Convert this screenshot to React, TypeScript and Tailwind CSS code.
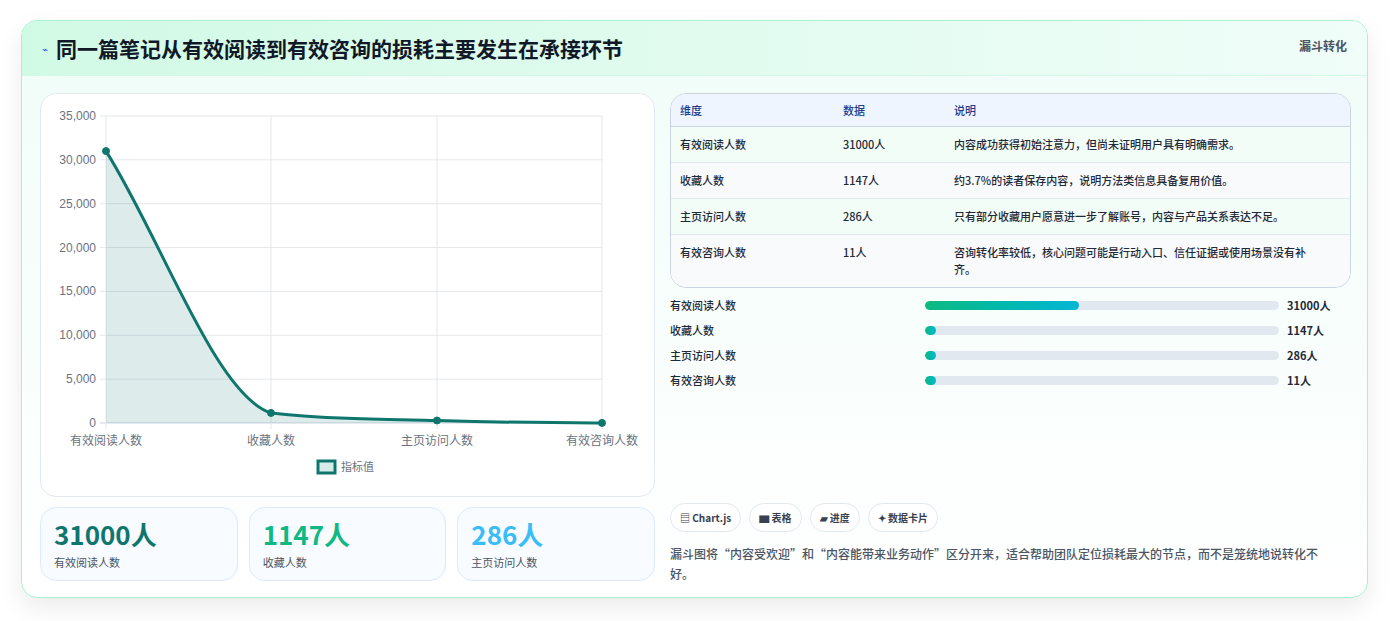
const ff = { fontFamily: '"Noto Sans CJK SC", "Noto Sans", sans-serif' };

const rows = [
  ['有效阅读人数', '31000人', '内容成功获得初始注意力，但尚未证明用户具有明确需求。'],
  ['收藏人数', '1147人', '约3.7%的读者保存内容，说明方法类信息具备复用价值。'],
  ['主页访问人数', '286人', '只有部分收藏用户愿意进一步了解账号，内容与产品关系表达不足。'],
  ['有效咨询人数', '11人', '咨询转化率较低，核心问题可能是行动入口、信任证据或使用场景没有补齐。'],
];
const bars = [
  ['有效阅读人数', 31000, '31000人'],
  ['收藏人数', 1147, '1147人'],
  ['主页访问人数', 286, '286人'],
  ['有效咨询人数', 11, '11人'],
] as const;

function Chart() {
  const ox = 40, oy = 93;
  const X = [105, 270, 436, 601].map((v) => v - ox);
  const yv = (v: number) => 422 - oy - (v / 35000) * 307;
  const vals = [31000, 1147, 286, 11];
  const line = `M${X[0]},${yv(31000)} C${160 - ox},${237 - oy} ${215 - ox},${395 - oy} ${X[1]},${yv(1147)} C${325 - ox},${418 - oy} ${380 - ox},${418.5 - oy} ${X[2]},${yv(286)} C${491 - ox},${421 - oy} ${546 - ox},${422 - oy} ${X[3]},${yv(11)}`;
  const ticks = [0, 5000, 10000, 15000, 20000, 25000, 30000, 35000];
  const labels = ['有效阅读人数', '收藏人数', '主页访问人数', '有效咨询人数'];
  return (
    <svg width="613" height="401" className="block" style={ff}>
      {ticks.map((t) => (
        <g key={t}>
          <line x1={X[0] - 6} x2={X[3]} y1={yv(t)} y2={yv(t)} stroke={t === 0 ? '#cbd5e1' : '#e5e7eb'} />
          <text x={55} y={yv(t) + 4} textAnchor="end" fontSize="12" fill="#6b7280" fontFamily="Liberation Sans, sans-serif">
            {t.toLocaleString('en-US')}
          </text>
        </g>
      ))}
      {X.map((x) => (
        <line key={x} x1={x} x2={x} y1={yv(35000)} y2={yv(0) + 6} stroke="#e5e7eb" />
      ))}
      <path d={`${line} L${X[3]},${yv(0)} L${X[0]},${yv(0)} Z`} fill="#0f766e" fillOpacity="0.14" />
      <path d={line} fill="none" stroke="#0f766e" strokeWidth="3" />
      {X.map((x, i) => (
        <circle key={x} cx={x} cy={yv(vals[i])} r="3.5" fill="#0f766e" stroke="#0f766e" />
      ))}
      {X.map((x, i) => (
        <text key={i} x={x} y={351} textAnchor="middle" fontSize="12" fill="#6b7280">{labels[i]}</text>
      ))}
      <rect x={277} y={367} width={17} height={12} fill="#d7ebe9" stroke="#0f766e" strokeWidth="3" />
      <text x={300} y={377} fontSize="11" fill="#6b7280">指标值</text>
    </svg>
  );
}

export default function App() {
  return (
    <div className="w-[1390px] h-[621px] bg-white pt-5 pl-[21px]" style={ff}>
      <div className="w-[1347px] h-[578px] rounded-2xl border border-[#a7f3d0] bg-gradient-to-b from-[#f0fdf8] to-white shadow-[0_10px_25px_rgba(0,0,0,0.08)] overflow-hidden">
        <div className="h-[55px] flex items-start justify-between px-5 bg-gradient-to-r from-[#d1fae5] to-[#f0fdf9] border-b border-[#d1fae5]">
          <div className="flex items-center gap-2 mt-[14px]">
            <span className="text-[#2563eb] text-[10px]">⌁</span>
            <span className="text-[21px] font-bold text-[#111827] leading-[27px]">同一篇笔记从有效阅读到有效咨询的损耗主要发生在承接环节</span>
          </div>
          <span className="text-[12px] font-bold text-[#4b5563] mt-[16px]">漏斗转化</span>
        </div>
        <div className="flex gap-[15px] pl-[18px] pt-[17px]">
          <div className="w-[615px] flex flex-col gap-[10px]">
            <div className="h-[404px] rounded-2xl border border-[#e2e8f0] bg-white">
              <Chart />
            </div>
            <div className="flex gap-[11px]">
              {[
                ['31000人', 'text-[#0f766e]', '有效阅读人数'],
                ['1147人', 'text-[#10b981]', '收藏人数'],
                ['286人', 'text-[#38bdf8]', '主页访问人数'],
              ].map(([v, c, l]) => (
                <div key={l} className="w-[198px] h-[74px] rounded-2xl border border-[#dbeafe] bg-[#f8fbff] px-[13px] pt-[10px]">
                  <div className={`text-[26px] font-bold leading-[32px] ${c}`}>{v}</div>
                  <div className="text-[11px] text-[#4b5563] mt-[4px]">{l}</div>
                </div>
              ))}
            </div>
          </div>
          <div className="w-[681px] flex flex-col">
            <div className="rounded-2xl border border-[#cbd5e1] overflow-hidden bg-[#fafcff] text-[11px] font-medium text-[#1f2937]">
              <div className="flex h-[33px] items-center bg-[#eef5ff] text-[#1e3a8a] border-b border-[#cbd5e1]">
                <div className="w-[163px] pl-[9px]">维度</div>
                <div className="w-[111px] pl-[9px]">数据</div>
                <div className="flex-1 pl-[9px]">说明</div>
              </div>
              {rows.map((r, i) => (
                <div key={i} className={`flex py-[9px] ${i < 3 ? 'border-b border-[#e2e8f0]' : ''} ${i % 2 ? 'bg-[#f8fafc]' : 'bg-[#f3fdf8]'}`}>
                  <div className="w-[163px] pl-[9px] leading-[17px]">{r[0]}</div>
                  <div className="w-[111px] pl-[9px] leading-[17px]">{r[1]}</div>
                  <div className="flex-1 pl-[9px] pr-[40px] leading-[17px]">{r[2]}</div>
                </div>
              ))}
            </div>
            <div className="mt-[10px] flex flex-col gap-[10px] text-[11px] font-medium text-[#1f2937]">
              {bars.map(([l, v, t]) => (
                <div key={l} className="flex items-center h-[15px]">
                  <div className="w-[255px]">{l}</div>
                  <div className="w-[354px] h-[9px] rounded-full bg-[#e2e8f0] overflow-hidden">
                    <div className="h-full rounded-full bg-gradient-to-r from-[#10b981] to-[#06b6d4]" style={{ width: Math.max(11, (v / 31000) * 154) + 'px' }} />
                  </div>
                  <div className="ml-[8px] font-bold">{t}</div>
                </div>
              ))}
            </div>
            <div className="mt-[115px] flex gap-[8px] text-[10px] font-bold text-[#374151]">
              {['▤ Chart.js', '▆ 表格', '▰ 进度', '✦ 数据卡片'].map((c) => (
                <div key={c} className="h-[29px] px-[9px] flex items-center rounded-full border border-[#e2e8f0] bg-white">{c}</div>
              ))}
            </div>
            <div className="mt-[12px] text-[12px] leading-[20px] text-[#4b5563] font-medium pr-[10px]">
              漏斗图将“内容受欢迎”和“内容能带来业务动作”区分开来，适合帮助团队定位损耗最大的节点，而不是笼统地说转化不好。
            </div>
          </div>
        </div>
      </div>
    </div>
  );
}
